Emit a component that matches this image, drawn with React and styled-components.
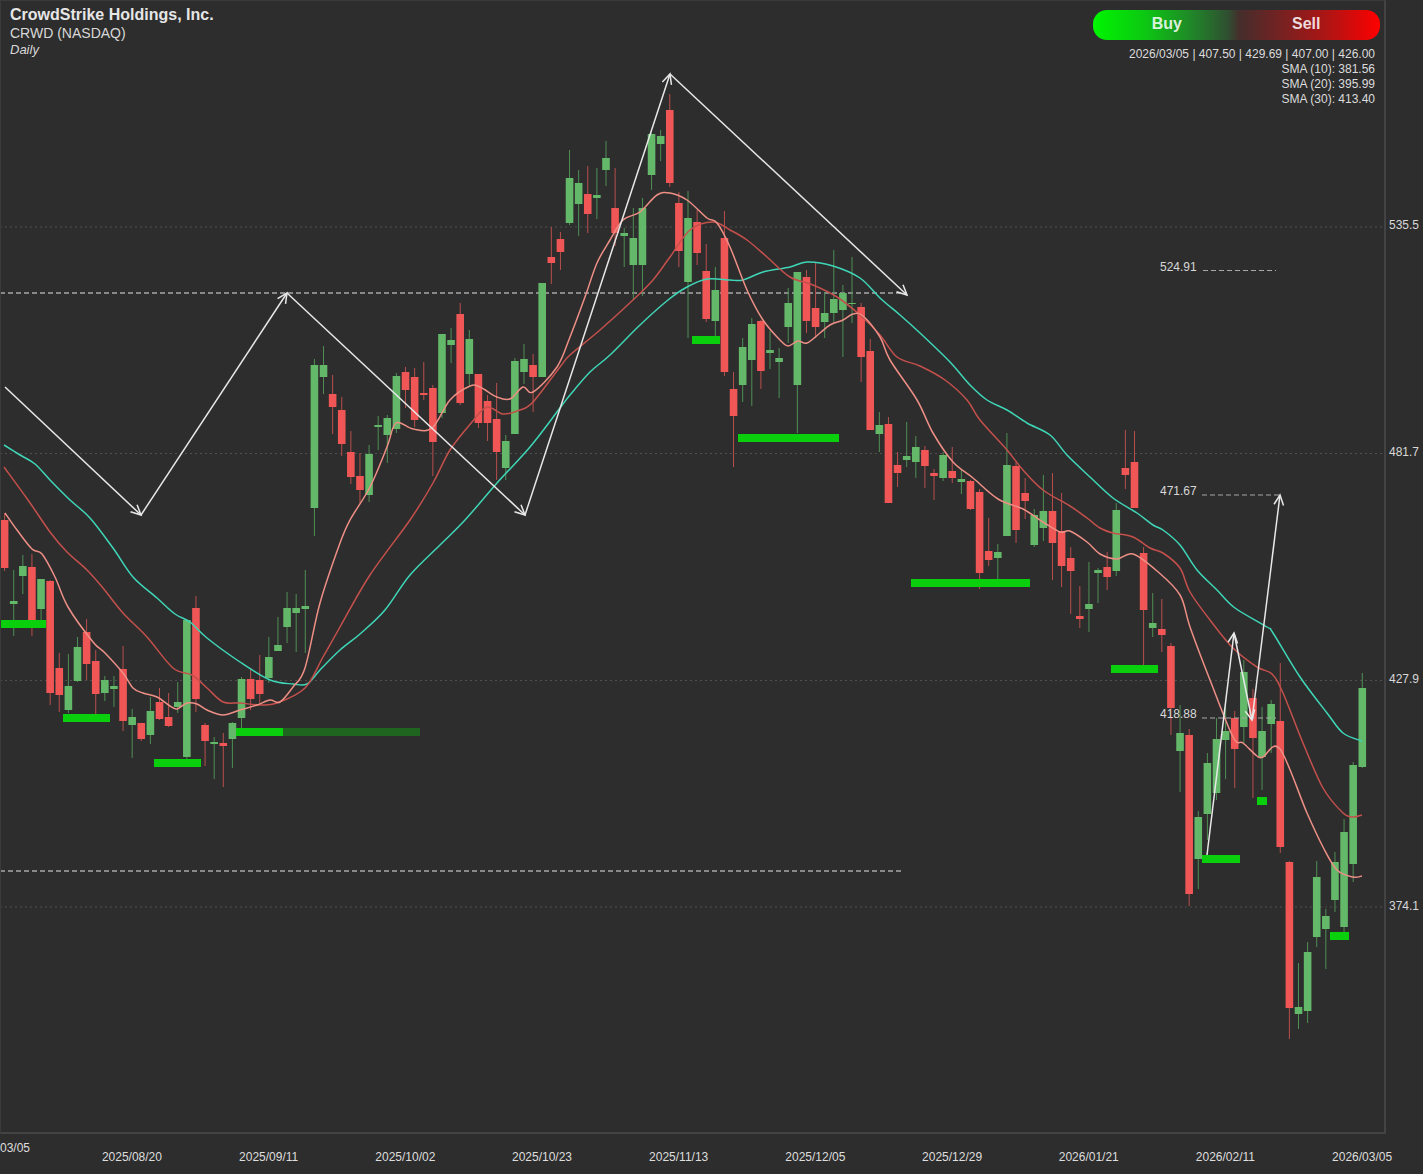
import React from 'react';
import styled, { createGlobalStyle } from 'styled-components';

const GlobalStyle = createGlobalStyle`
  html, body {
    margin: 0;
    padding: 0;
    background: #2d2d2d;
  }
  body {
    font-family: "Liberation Sans", Arial, sans-serif;
  }
`;

const Page = styled.div`
  width: 1423px;
  height: 1174px;
  overflow: hidden;
  display: grid;
  grid-template-columns: 1386px 37px;
  grid-template-rows: 1134px 40px;
  background: #2d2d2d;
  color: #dedede;
`;

const Plot = styled.div`
  position: relative;
  box-sizing: border-box;
  border-top: 1px solid #3a3a3a;
  border-left: 1px solid #3a3a3a;
  border-right: 2px solid #434343;
  border-bottom: 2px solid #434343;
  overflow: hidden;
`;

const ChartSvg = styled.svg`
  display: block;
  margin: -1px 0 0 -1px;
`;

const TitleBlock = styled.div`
  position: absolute;
  left: 9px;
  top: 5px;
`;

const Title = styled.div`
  font-size: 16px;
  font-weight: 700;
  line-height: 18px;
  color: #e6e6e6;
`;

const Ticker = styled.div`
  margin-top: 1px;
  font-size: 14px;
  line-height: 16px;
  color: #d8d8d8;
`;

const Period = styled.div`
  margin-top: 1px;
  font-size: 13px;
  font-style: italic;
  line-height: 16px;
  color: #d8d8d8;
`;

const InfoBlock = styled.div`
  position: absolute;
  right: 4px;
  top: 9px;
  width: 287px;
`;

const TradeBar = styled.div`
  display: flex;
  height: 30px;
  border-radius: 14px;
  background: linear-gradient(
    90deg,
    #00f500 0%,
    #0cc812 18%,
    #22802a 36%,
    #2f4f30 47%,
    #452e2c 51%,
    #6a2424 62%,
    #b01414 82%,
    #ff0000 100%
  );
`;

const TradeButton = styled.div`
  flex: 1;
  display: flex;
  align-items: center;
  justify-content: center;
  padding: 0 ${({ $right }) => $right || 0}px 3px ${({ $left }) => $left || 0}px;
  box-sizing: border-box;
  font-size: 16px;
  font-weight: 700;
  color: rgba(255, 255, 255, 0.85);
`;

const Quote = styled.div`
  margin-top: 7px;
  padding-right: 5px;
  font-size: 12px;
  line-height: 15px;
  text-align: right;
  color: #dcdcdc;
`;

const PriceAxis = styled.div`
  padding: 112px 0 0 3px;
  display: flex;
  flex-direction: column;
`;

const PriceLabel = styled.div`
  height: 227px;
  line-height: 227px;
  font-size: 12px;
  color: #d8d8d8;
`;

const DateAxis = styled.div`
  grid-column: 1 / 3;
  display: flex;
  padding-top: 16px;
  font-size: 12px;
  line-height: 14px;
  color: #dedede;
`;

const StartDate = styled.div`
  flex: 0 0 63.6px;
  margin-top: -9px;
`;

const DateLabel = styled.div`
  flex: 0 0 136.7px;
  text-align: center;
`;

const LevelText = styled.text`
  font-family: "Liberation Sans", Arial, sans-serif;
  font-size: 12px;
  fill: #d8d8d8;
`;

// [dir, wickTop, bodyTop, bodyBottom, wickBottom] in chart pixels
const candles = [
  ['r',513,520,568,571],['g',570,601,604,636],['g',555,566,576,594],['r',554,567,622,636],['g',579,579,609,622],
  ['r',580,581,693,705],['r',653,668,695,712],['g',654,686,710,713],['g',637,647,681,682],['r',619,632,664,680],
  ['r',650,661,694,715],['g',676,680,693,701],['g',676,686,689,707],['r',646,669,721,731],['g',709,717,725,758],
  ['r',723,723,739,741],['g',697,711,735,744],['r',688,702,719,720],['r',693,717,726,727],['g',682,702,707,713],
  ['g',619,620,757,759],['r',596,608,699,712],['r',723,725,741,766],['g',737,742,744,779],['r',733,743,746,787],
  ['g',722,723,739,768],['g',677,679,718,728],['r',668,679,699,710],['r',655,680,694,703],['g',637,657,678,683],
  ['g',617,645,651,651],['g',592,608,627,643],['g',594,608,613,652],['g',570,606,609,653],['g',359,365,508,536],
  ['g',346,365,377,394],['r',375,394,407,434],['r',397,410,444,456],['r',431,452,477,484],['r',453,476,490,503],
  ['g',445,454,495,502],['g',416,425,427,450],['g',415,418,435,463],['g',373,376,429,433],['r',367,372,390,408],
  ['r',368,377,420,427],['r',362,393,395,400],['r',385,388,442,476],['g',334,334,413,418],['g',328,340,345,363],
  ['r',303,314,403,405],['g',330,339,374,385],['r',374,374,423,428],['r',395,401,423,441],['r',383,419,452,480],
  ['g',435,441,468,480],['g',358,361,434,434],['g',344,359,372,384],['r',354,365,377,412],['g',283,283,377,377],
  ['r',227,257,263,284],['r',232,239,252,270],['g',150,178,223,225],['g',170,183,204,236],['r',166,194,214,233],
  ['g',168,195,198,219],['g',141,158,170,186],['r',168,208,233,246],['g',228,233,236,267],['g',208,238,265,300],
  ['g',198,208,265,296],['g',133,134,175,190],['g',130,136,144,161],['r',94,110,183,187],['r',192,203,251,267],
  ['g',191,218,282,338],['r',210,222,253,265],['r',244,271,319,322],['g',267,290,321,337],['r',211,238,372,376],
  ['r',372,389,416,467],['g',338,347,385,402],['g',318,324,360,406],['r',320,321,371,389],['g',331,350,353,369],
  ['g',348,358,362,398],['g',288,303,327,343],['g',272,272,385,433],['r',270,277,321,333],['r',263,308,327,338],
  ['g',292,313,322,338],['g',250,299,313,323],['g',285,293,310,357],['g',257,303,304,323],['r',303,307,357,382],
  ['r',339,351,430,430],['g',412,425,434,452],['r',417,424,503,503],['r',452,465,473,487],['g',422,456,460,467],
  ['g',436,447,462,478],['r',446,450,466,488],['r',469,473,476,500],['g',452,455,478,481],['r',447,471,478,483],
  ['g',469,479,482,494],['r',480,481,509,510],['r',489,492,573,589],['r',518,551,560,566],['g',544,552,558,580],
  ['g',433,465,536,536],['r',462,466,530,543],['r',478,493,501,519],['g',509,515,545,547],['g',475,511,528,541],
  ['r',473,511,543,580],['r',493,531,566,587],['r',547,558,571,614],['r',586,616,619,628],['g',562,604,609,632],
  ['g',568,570,573,603],['r',552,567,577,590],['g',503,510,571,576],['r',430,468,475,489],['r',431,462,508,508],
  ['r',547,553,610,665],['g',593,623,628,637],['r',599,629,635,652],['r',643,646,708,735],['g',705,733,751,792],
  ['r',729,735,894,906],['g',811,817,859,889],['g',753,763,814,840],['g',718,739,793,800],['g',700,731,740,779],
  ['r',711,718,749,788],['g',660,672,727,743],['r',689,698,738,798],['g',707,731,757,790],['g',700,704,724,753],
  ['r',663,721,847,853],['r',861,862,1008,1039],['g',963,1007,1014,1029],['g',942,952,1011,1023],['g',861,877,937,947],
  ['g',909,916,929,969],['g',852,862,900,912],['g',819,832,927,932],['g',762,765,864,882],['g',673,688,767,768],
];

// support zones: [x, y, width, colour]
const zones = [
  [0,620,46,'#09cf0d'],[63,714,47,'#09cf0d'],[154,759,47,'#09cf0d'],[236,728,47,'#09cf0d'],[283,728,137,'#1f651f'],
  [692,336,28,'#09cf0d'],[738,434,101,'#09cf0d'],[911,579,119,'#09cf0d'],[1111,665,47,'#09cf0d'],
  [1257,797,10,'#09cf0d'],[1202,855,38,'#09cf0d'],[1330,932,19,'#09cf0d'],
];

const sma30 = [[4,445],[20,455],[35,464],[50,480],[70,500],[90,518],[113,548],[133,577],[157,598],[175,614],[190,622],[207,638],[240,662],[270,680],[293,684],[307,684],[320,670],[340,650],[360,634],[385,610],[410,575],[440,545],[465,520],[497,483],[530,447],[560,408],[570,395],[590,372],[610,355],[640,325],[668,300],[687,287],[707,279],[730,280],[743,280],[763,272],[790,267],[807,262],[833,266],[860,278],[880,298],[900,315],[920,333],[950,362],[970,385],[987,400],[1007,410],[1027,423],[1050,435],[1067,455],[1090,477],[1113,498],[1137,513],[1153,525],[1163,530],[1180,545],[1197,570],[1217,590],[1235,608],[1267,627],[1273,633],[1300,677],[1327,713],[1343,733],[1362,741]];

const sma20 = [[4,467],[28,500],[50,532],[67,552],[87,570],[103,588],[123,613],[147,637],[173,668],[192,675],[207,688],[223,702],[240,703],[260,705],[277,703],[305,688],[323,657],[340,627],[370,575],[410,520],[433,483],[450,450],[472,422],[487,407],[503,414],[520,410],[533,402],[560,367],[570,355],[600,330],[633,300],[653,280],[670,257],[690,230],[713,222],[730,230],[747,240],[767,257],[790,277],[813,285],[837,297],[860,315],[880,335],[897,357],[920,366],[945,380],[967,400],[980,420],[1007,450],[1023,470],[1043,490],[1070,506],[1087,518],[1100,528],[1113,533],[1133,537],[1150,548],[1163,553],[1180,568],[1190,592],[1210,620],[1233,648],[1257,667],[1272,674],[1283,693],[1303,743],[1323,788],[1343,813],[1353,817],[1362,815]];

const sma10 = [[5,513],[17,530],[32,549],[42,554],[55,577],[68,607],[93,642],[105,653],[123,673],[133,688],[143,693],[157,697],[170,706],[177,709],[187,703],[197,704],[207,710],[223,715],[240,710],[257,705],[270,700],[280,702],[293,687],[305,668],[320,603],[340,543],[350,520],[370,487],[387,447],[396,423],[413,429],[432,428],[450,400],[470,386],[480,387],[497,397],[510,399],[523,387],[533,392],[557,367],[570,337],[585,297],[597,263],[610,240],[623,220],[640,212],[657,195],[670,193],[687,200],[707,218],[717,223],[730,247],[747,290],[763,320],[780,340],[788,346],[798,341],[807,343],[820,333],[830,325],[843,320],[853,314],[863,316],[880,337],[890,360],[917,400],[933,433],[953,462],[973,478],[998,499],[1023,509],[1043,522],[1060,532],[1070,531],[1087,542],[1100,554],[1117,559],[1133,554],[1157,571],[1180,595],[1190,627],[1210,680],[1233,737],[1243,743],[1257,756],[1263,757],[1280,749],[1307,813],[1323,847],[1337,870],[1353,877],[1362,876]];

const zigzagA = [[5,387],[141,515],[287,293],[525,515],[670,74],[907,295]];
const zigzagB = [[1207,855],[1234,633],[1252,720],[1280,495]];

const dates = ['2025/08/20','2025/09/11','2025/10/02','2025/10/23','2025/11/13','2025/12/05','2025/12/29','2026/01/21','2026/02/11','2026/03/05'];
const prices = ['535.5','481.7','427.9','374.1'];

const toPoints = (pts) => pts.map((p) => p.join(',')).join(' ');

// catmull-rom through the sampled points, the averages are not angular
const smoothPath = (pts) => {
  let d = `M${pts[0][0]},${pts[0][1]}`;
  for (let i = 0; i < pts.length - 1; i++) {
    const p0 = pts[Math.max(i - 1, 0)];
    const p1 = pts[i];
    const p2 = pts[i + 1];
    const p3 = pts[Math.min(i + 2, pts.length - 1)];
    const c1 = [p1[0] + (p2[0] - p0[0]) / 6, p1[1] + (p2[1] - p0[1]) / 6];
    const c2 = [p2[0] - (p3[0] - p1[0]) / 6, p2[1] - (p3[1] - p1[1]) / 6];
    d += ` C${c1[0].toFixed(1)},${c1[1].toFixed(1)} ${c2[0].toFixed(1)},${c2[1].toFixed(1)} ${p2[0]},${p2[1]}`;
  }
  return d;
};

const Candle = ({ data, index }) => {
  const [dir, wt, bt, bb, wb] = data;
  const x = 4.6 + index * 9.112;
  const body = dir === 'g' ? '#63b869' : '#f05656';
  const wick = dir === 'g' ? '#4f8f54' : '#b84f4c';
  return (
    <g>
      <line x1={x} x2={x} y1={wt} y2={wb} stroke={wick} strokeWidth="1" />
      <rect x={x - 3.8} y={bt} width="7.6" height={bb - bt} fill={body} />
    </g>
  );
};

const Arrow = ({ from, to }) => {
  const angle = Math.atan2(to[1] - from[1], to[0] - from[0]);
  const barb = (off) => [to[0] - 11 * Math.cos(angle + off), to[1] - 11 * Math.sin(angle + off)];
  return (
    <g stroke="#e8e8e8" fill="none" strokeWidth="1.5">
      <line x1={from[0]} y1={from[1]} x2={to[0]} y2={to[1]} />
      <polyline points={toPoints([barb(0.45), to, barb(-0.45)])} />
    </g>
  );
};

const Zigzag = ({ points }) =>
  points.slice(1).map((p, i) => <Arrow key={i} from={points[i]} to={p} />);

const App = () => (
  <Page>
    <GlobalStyle />
    <Plot>
      <ChartSvg width="1385" height="1134" viewBox="0 0 1385 1134">
        {[227, 453.5, 680.5, 907].map((y) => (
          <line key={y} x1="0" x2="1385" y1={y} y2={y} stroke="#505050" strokeWidth="1" strokeDasharray="2 3" />
        ))}
        <line x1="0" x2="907" y1="293" y2="293" stroke="#a8a8a8" strokeWidth="1.4" strokeDasharray="5 3" />
        <line x1="0" x2="901" y1="871" y2="871" stroke="#a8a8a8" strokeWidth="1.4" strokeDasharray="5 3" />
        {candles.map((c, i) => (
          <Candle key={i} data={c} index={i} />
        ))}
        {zones.map(([x, y, w, fill]) => (
          <rect key={`${x}-${y}`} x={x} y={y} width={w} height="8" fill={fill} />
        ))}
        <path d={smoothPath(sma30)} fill="none" stroke="#3fd6b8" strokeWidth="1.5" />
        <path d={smoothPath(sma20)} fill="none" stroke="#c4504c" strokeWidth="1.5" />
        <path d={smoothPath(sma10)} fill="none" stroke="#ee8f86" strokeWidth="1.5" />
        <line x1="1203" x2="1276" y1="270.5" y2="270.5" stroke="#a8a8a8" strokeDasharray="5 3" />
        <line x1="1202" x2="1280" y1="495" y2="495" stroke="#a8a8a8" strokeDasharray="5 3" />
        <line x1="1202" x2="1276" y1="718" y2="718" stroke="#a8a8a8" strokeDasharray="5 3" />
        <LevelText x="1160" y="271">524.91</LevelText>
        <LevelText x="1160" y="495">471.67</LevelText>
        <LevelText x="1160" y="718">418.88</LevelText>
        <Zigzag points={zigzagA} />
        <Zigzag points={zigzagB} />
      </ChartSvg>
      <TitleBlock>
        <Title>CrowdStrike Holdings, Inc.</Title>
        <Ticker>CRWD (NASDAQ)</Ticker>
        <Period>Daily</Period>
      </TitleBlock>
      <InfoBlock>
        <TradeBar>
          <TradeButton $left={4}>Buy</TradeButton>
          <TradeButton $right={4}>Sell</TradeButton>
        </TradeBar>
        <Quote>
          <div>2026/03/05 | 407.50 | 429.69 | 407.00 | 426.00</div>
          <div>SMA (10): 381.56</div>
          <div>SMA (20): 395.99</div>
          <div>SMA (30): 413.40</div>
        </Quote>
      </InfoBlock>
    </Plot>
    <PriceAxis>
      {prices.map((p) => (
        <PriceLabel key={p}>{p}</PriceLabel>
      ))}
    </PriceAxis>
    <DateAxis>
      <StartDate>03/05</StartDate>
      {dates.map((d) => (
        <DateLabel key={d}>{d}</DateLabel>
      ))}
    </DateAxis>
  </Page>
);

export default App;
